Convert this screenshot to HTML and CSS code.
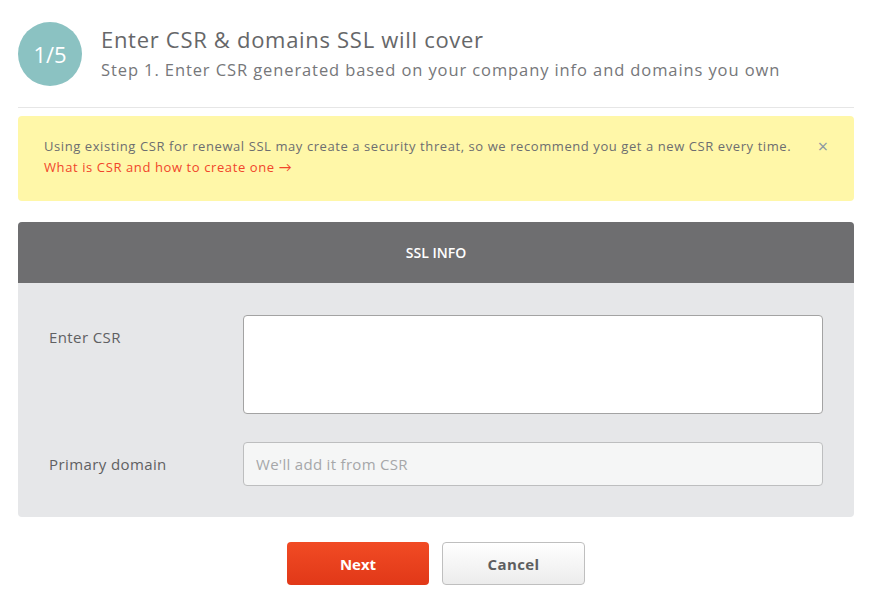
FILE: index.html
```html
<!DOCTYPE html>
<html>
<head>
<meta charset="utf-8">
<link rel="stylesheet" href="styles.css">
</head>
<body>
<div class="page">
  <header class="step">
    <div class="step-num">1/5</div>
    <div class="step-text">
      <h1 class="step-title">Enter CSR &amp; domains SSL will cover</h1>
      <p class="step-sub">Step 1. Enter CSR generated based on your company info and domains you own</p>
    </div>
  </header>
  <div class="alert">
    <div class="alert-body">
      <p class="alert-text">Using existing CSR for renewal SSL may create a security threat, so we recommend you get a new CSR every time.</p>
      <a class="alert-link" href="#">What is CSR and how to create one →</a>
    </div>
    <span class="alert-close">×</span>
  </div>
  <section class="panel">
    <div class="panel-head">SSL INFO</div>
    <div class="panel-body">
      <div class="row">
        <label class="row-label">Enter CSR</label>
        <textarea class="field field-area"></textarea>
      </div>
      <div class="row">
        <label class="row-label">Primary domain</label>
        <input class="field field-input" placeholder="We'll add it from CSR">
      </div>
    </div>
  </section>
  <div class="actions">
    <button class="btn btn-primary">Next</button>
    <button class="btn btn-secondary">Cancel</button>
  </div>
</div>
</body>
</html>
```
FILE: styles.css
```css
* { box-sizing: border-box; }
body {
  margin: 0;
  font-family: "Open Sans", Lato, sans-serif;
  color: #6d6e70;
  background: #fff;
}
.page {
  padding: 22px 17px 0 18px;
}
.step {
  display: flex;
  align-items: flex-start;
  gap: 19px;
  padding-bottom: 21px;
  border-bottom: 1px solid #e6e6e6;
}
.step-num {
  width: 64px;
  height: 64px;
  border-radius: 50%;
  background: #8bc2c2;
  color: #fff;
  font-size: 22px;
  display: flex;
  align-items: center;
  justify-content: center;
  flex-shrink: 0;
}
.step-text { padding-top: 3px; }
.step-title {
  margin: 0;
  font-size: 22px;
  line-height: 28px;
  font-weight: 400;
  letter-spacing: 0.7px;
  color: #666769;
}
.step-sub {
  margin: 6px 0 0;
  font-size: 16.5px;
  line-height: 22px;
  letter-spacing: 0.9px;
  color: #76777a;
}
.alert {
  margin-top: 8px;
  background: #fff7a8;
  border-radius: 4px;
  padding: 20px 26px 23px 26px;
  display: flex;
  justify-content: space-between;
  align-items: flex-start;
}
.alert-text {
  margin: 0;
  font-size: 13px;
  line-height: 21px;
  letter-spacing: 0.58px;
  color: #6d6e70;
}
.alert-link {
  display: block;
  font-size: 13px;
  line-height: 21px;
  letter-spacing: 0.6px;
  color: #f1452b;
  text-decoration: none;
}
.alert-close {
  color: #8a98a3;
  font-size: 18px;
  line-height: 20px;
}
.panel {
  margin-top: 21px;
  border-radius: 4px;
  overflow: hidden;
  background: #e6e7e9;
}
.panel-head {
  height: 61px;
  background: #6e6e70;
  color: #fff;
  font-size: 14px;
  font-weight: 600;
  display: flex;
  align-items: center;
  justify-content: center;
}
.panel-body {
  padding: 32px 31px 31px 31px;
  display: flex;
  flex-direction: column;
  gap: 28px;
}
.row {
  display: flex;
  align-items: flex-start;
}
.row-label {
  width: 194px;
  flex-shrink: 0;
  padding-top: 12px;
  font-size: 15px;
  line-height: 20px;
  letter-spacing: 0.4px;
  color: #5f6062;
}
.field {
  flex: 1;
  display: block;
  margin: 0;
  border-radius: 4px;
  font-family: inherit;
  font-size: 15px;
  color: #555;
}
.field-area {
  height: 99px;
  background: #fff;
  border: 1px solid #a3a3a3;
  resize: none;
}
.field-input {
  height: 44px;
  background: #f5f6f6;
  border: 1px solid #bdbebf;
  padding: 0 12px;
  letter-spacing: 0.3px;
}
.field-input::placeholder { color: #a6a7a9; }
.actions {
  display: flex;
  justify-content: center;
  gap: 13px;
  margin-top: 25px;
}
.btn {
  height: 43px;
  margin: 0;
  border-radius: 4px;
  font-family: inherit;
  font-size: 15px;
  font-weight: 700;
}
.btn-primary {
  width: 142px;
  border: none;
  color: #fff;
  background: linear-gradient(#f14b24, #e13818);
}
.btn-secondary {
  width: 143px;
  border: 1px solid #bfbfbf;
  color: #5d5e60;
  letter-spacing: 0.4px;
  background: linear-gradient(#fff, #ececec);
}
```
